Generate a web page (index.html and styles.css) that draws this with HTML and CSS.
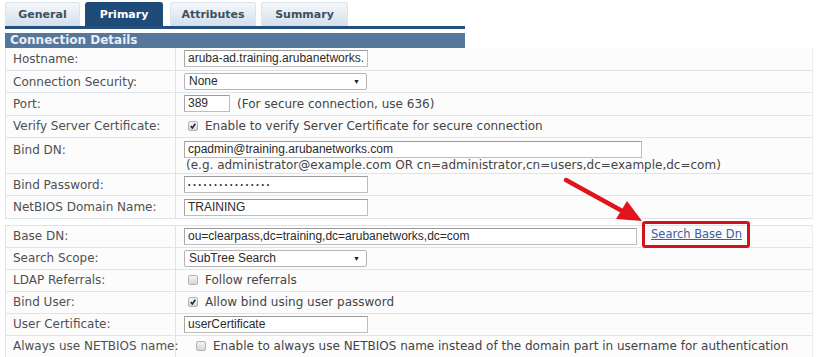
FILE: index.html
```html
<!DOCTYPE html>
<html>
<head>
<meta charset="utf-8">
<title>Authentication Source - Primary</title>
<link rel="stylesheet" href="styles.css">
</head>
<body>
<div class="page">
  <div class="tabs">
    <div class="tab t-general">General</div>
    <div class="tab t-primary active">Primary</div>
    <div class="tab t-attr">Attributes</div>
    <div class="tab t-summary">Summary</div>
  </div>
  <div class="tabline"></div>
  <div class="section">Connection Details</div>

  <table class="form first">
    <tr><th>Hostname:</th><td><span class="field w-std">aruba-ad.training.arubanetworks.</span></td></tr>
    <tr><th>Connection Security:</th><td><span class="field select w-sel"><span>None</span><span class="caret">&#9660;</span></span></td></tr>
    <tr><th>Port:</th><td><span class="field w-port">389</span><span class="hint">(For secure connection, use 636)</span></td></tr>
    <tr><th>Verify Server Certificate:</th><td><span class="cb checked"><svg viewBox="0 0 10 10"><path d="M2.2 5.2 L4.2 7.4 L7.9 2.2" /></svg></span>Enable to verify Server Certificate for secure connection</td></tr>
    <tr class="tall"><th>Bind DN:</th><td><span class="field w-dn">cpadmin@training.arubanetworks.com</span><div class="example">(e.g. administrator@example.com OR cn=administrator,cn=users,dc=example,dc=com)</div></td></tr>
    <tr><th>Bind Password:</th><td><span class="field w-std pw">&#8226;&#8226;&#8226;&#8226;&#8226;&#8226;&#8226;&#8226;&#8226;&#8226;&#8226;&#8226;&#8226;&#8226;&#8226;&#8226;</span></td></tr>
    <tr><th>NetBIOS Domain Name:</th><td><span class="field w-std">TRAINING</span></td></tr>
  </table>

  <table class="form second">
    <tr><th>Base DN:</th><td><span class="field w-base">ou=clearpass,dc=training,dc=arubanetworks,dc=com</span><a class="search-link" href="#">Search Base Dn</a></td></tr>
    <tr><th>Search Scope:</th><td><span class="field select w-sel"><span>SubTree Search</span><span class="caret">&#9660;</span></span></td></tr>
    <tr><th>LDAP Referrals:</th><td><span class="cb"></span>Follow referrals</td></tr>
    <tr><th>Bind User:</th><td><span class="cb checked"><svg viewBox="0 0 10 10"><path d="M2.2 5.2 L4.2 7.4 L7.9 2.2" /></svg></span>Allow bind using user password</td></tr>
    <tr><th>User Certificate:</th><td><span class="field w-std">userCertificate</span></td></tr>
    <tr class="wide-label"><th>Always use NETBIOS name:</th><td><span class="cb"></span>Enable to always use NETBIOS name instead of the domain part in username for authentication</td></tr>
  </table>

  <svg class="arrow" width="819" height="357" viewBox="0 0 819 357">
    <line x1="566" y1="180" x2="624" y2="212" />
    <polygon points="642,221 616,219 627,201" />
  </svg>
</div>
</body>
</html>
```

FILE: styles.css
```css
* { box-sizing: border-box; }

body {
  margin: 0;
  background: #ffffff;
  font-family: "DejaVu Sans", Verdana, sans-serif;
  font-size: 12px;
  color: #444;
}

.page {
  position: relative;
  padding: 2px 0 0 5px;
  width: 819px;
  height: 357px;
  overflow: hidden;
}

.tabs {
  display: flex;
  gap: 5px;
  height: 24px;
}

.tab {
  flex: none;
  display: flex;
  align-items: center;
  justify-content: center;
  font-size: 11px;
  font-weight: bold;
  color: #3d4e61;
  background: linear-gradient(#f6f8fa, #d2dfec);
  border: 1px solid #dbe3eb;
  border-bottom: none;
  border-radius: 3px 3px 0 0;
}

.t-general { width: 75px; }
.t-primary { width: 78px; }
.t-attr { width: 86px; margin-left: 2px; }
.t-summary { width: 87px; }

.tab.active {
  background: #1f4b78;
  border-color: #1f4b78;
  color: #ffffff;
}

.tabline {
  width: 460px;
  height: 3px;
  background: #244f7b;
}

.section {
  width: 460px;
  height: 15px;
  margin-top: 4px;
  padding-left: 5px;
  background: #55779b;
  color: #e9eef5;
  font-size: 12px;
  font-weight: bold;
  line-height: 15px;
}

.form {
  border-collapse: collapse;
  table-layout: fixed;
  width: 808px;
  background: #fcfcfd;
}

.form.second {
  margin-top: 6px;
  border-top: 1px solid #dfe4ea;
}

.form th,
.form td {
  height: 22px;
  padding: 0;
  border-bottom: 1px solid #dfe4ea;
  white-space: nowrap;
  vertical-align: middle;
}

.form.first th,
.form.first td {
  height: 22.4px;
}

.form th {
  width: 170px;
  padding-left: 7px;
  text-align: left;
  font-weight: normal;
  color: #505050;
  border-left: 1px solid #dfe4ea;
  border-right: 1px solid #dfe4ea;
  overflow: visible;
}

.form td {
  padding-left: 8px;
  color: #444;
  border-right: 1px solid #e9edf1;
}

.form tr.wide-label td .cb {
  margin-left: 12px;
}

.form.first tr.tall th,
.form.first tr.tall td {
  height: 36px;
  vertical-align: top;
  padding-top: 3px;
}

.form.first tr.tall th {
  padding-top: 5px;
}

.field {
  display: inline-block;
  height: 17px;
  padding: 0 3px;
  border: 1px solid #bdbdbd;
  border-top-color: #9c9c9c;
  border-left-color: #a8a8a8;
  background: #fff;
  font-family: "Liberation Sans", Arial, sans-serif;
  font-size: 12px;
  line-height: 15px;
  color: #2a2a2a;
  white-space: nowrap;
  overflow: hidden;
  vertical-align: middle;
}

.field.pw {
  font-size: 7px;
  letter-spacing: 2.8px;
  line-height: 15px;
}

.w-std { width: 184px; }
.w-sel { width: 183px; }
.w-port { width: 46px; }
.w-dn { width: 458px; }
.w-base { width: 453px; }

.select {
  display: inline-flex;
  align-items: center;
  justify-content: space-between;
  padding: 0 6px 0 4px;
  border-color: #b5b5b5;
  border-radius: 2px;
}

.caret {
  font-size: 7px;
  color: #222;
}

.hint {
  margin-left: 7px;
  vertical-align: middle;
}

.cb {
  display: inline-block;
  width: 10px;
  height: 10px;
  margin: 0 7px 0 4px;
  border: 1px solid #b4b4b4;
  border-radius: 2px;
  background: linear-gradient(#f4f4f4, #d6d6d6);
  vertical-align: -1px;
}

.cb svg {
  display: block;
  width: 8px;
  height: 8px;
}

.cb svg path {
  fill: none;
  stroke: #2b2b2b;
  stroke-width: 2;
}

.example {
  margin-top: 0;
  padding-left: 2px;
  line-height: 15px;
}

.search-link {
  display: inline-block;
  margin: -8px 0 -4px 5px;
  padding: 4px 5px 4px 6px;
  border: 3px solid #d3131b;
  border-radius: 3px;
  font-size: 11.5px;
  color: #3b5f9c;
  text-decoration: underline;
  vertical-align: middle;
  line-height: 13px;
}

.arrow {
  position: absolute;
  left: 0;
  top: 0;
  pointer-events: none;
}

.arrow line {
  stroke: #e0141a;
  stroke-width: 4.5;
  stroke-linecap: round;
}

.arrow polygon {
  fill: #e0141a;
}
```
